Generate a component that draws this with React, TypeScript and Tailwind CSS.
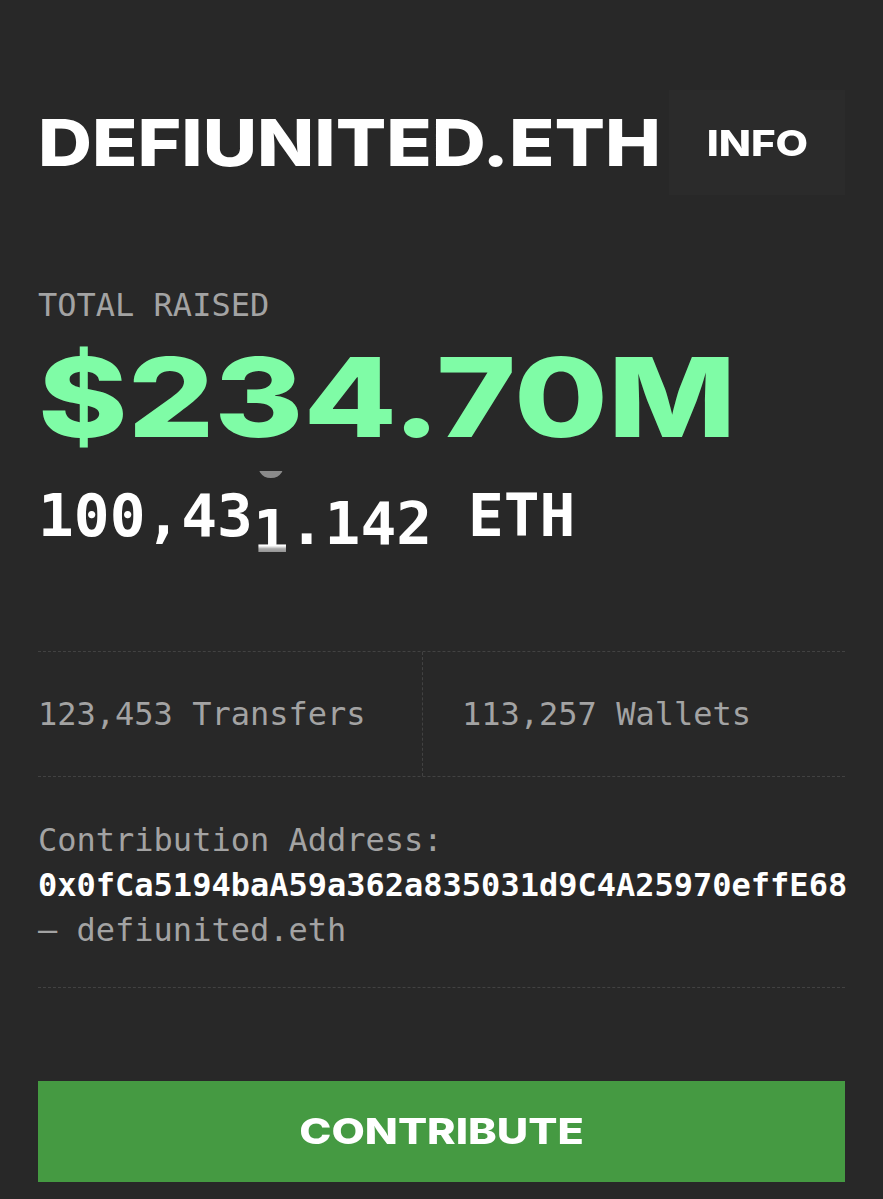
const display = "font-['Inter','Liberation_Sans',sans-serif] font-extrabold";
const mono = "font-['DejaVu_Sans_Mono','Liberation_Mono',monospace]";

function RollingEth() {
  return (
    <div className={`${mono} mt-[34px] flex text-[59.5px] leading-none font-bold text-white`}>
      <span>100,43</span>
      {/* digit caught mid-roll */}
      <span className="relative inline-block translate-y-[16px]">
        <span aria-hidden className="absolute left-0 top-[-31px] h-[8px] w-full overflow-hidden text-[#8a8a8a]">
          <span className="-mt-[44px] block leading-[60px]">0</span>
        </span>
        <span className="block [mask-image:linear-gradient(to_bottom,black_73%,rgba(0,0,0,0.6)_78%,rgba(0,0,0,0.45)_86%)]">1</span>
      </span>
      <span className="inline-block translate-y-[8px]">.142</span>
      <span className="whitespace-pre"> ETH</span>
    </div>
  );
}

export default function App() {
  return (
    <div className="min-h-screen bg-[#282828] px-[38px] pt-[90px]">
      <div className="flex h-[105px] items-center justify-between">
        <h1 className={`${display} inline-block origin-left scale-x-[1.15] text-[65px] leading-none text-white`}>
          DEFIUNITED.ETH
        </h1>
        <button className="flex h-[105px] w-[176px] items-center justify-center bg-[#2b2b2b]">
          <span className={`${display} inline-block scale-x-[1.17] text-[36px] leading-none text-white`}>INFO</span>
        </button>
      </div>

      <p className={`${mono} mt-[94px] text-[32px] leading-none text-[#a3a3a3]`}>TOTAL RAISED</p>
      <p className={`${display} mt-[21px] inline-block origin-left scale-x-[1.235] text-[110px] leading-none text-[#7ffca6]`}>
        $234.70M
      </p>
      <RollingEth />

      <div className={`${mono} mt-[105px] flex h-[126px] border-y border-dashed border-[#424242] text-[32px] text-[#a3a3a3]`}>
        <div className="flex w-[385px] items-center border-r border-dashed border-[#424242]">123,453 Transfers</div>
        <div className="flex items-center pl-[39px]">113,257 Wallets</div>
      </div>

      <div className={`${mono} border-b border-dashed border-[#424242] pt-[41px] pb-[34px] text-[32px] leading-[45px]`}>
        <p className="text-[#a3a3a3]">Contribution Address:</p>
        <p className="font-bold text-white">0x0fCa5194baA59a362a835031d9C4A25970effE68</p>
        <p className="text-[#a3a3a3]">— defiunited.eth</p>
      </div>

      <button className="mt-[93px] flex h-[101px] w-full items-center justify-center bg-[#459a42]">
        <span className={`${display} inline-block scale-x-[1.2] text-[36px] leading-none text-white`}>CONTRIBUTE</span>
      </button>
    </div>
  );
}
